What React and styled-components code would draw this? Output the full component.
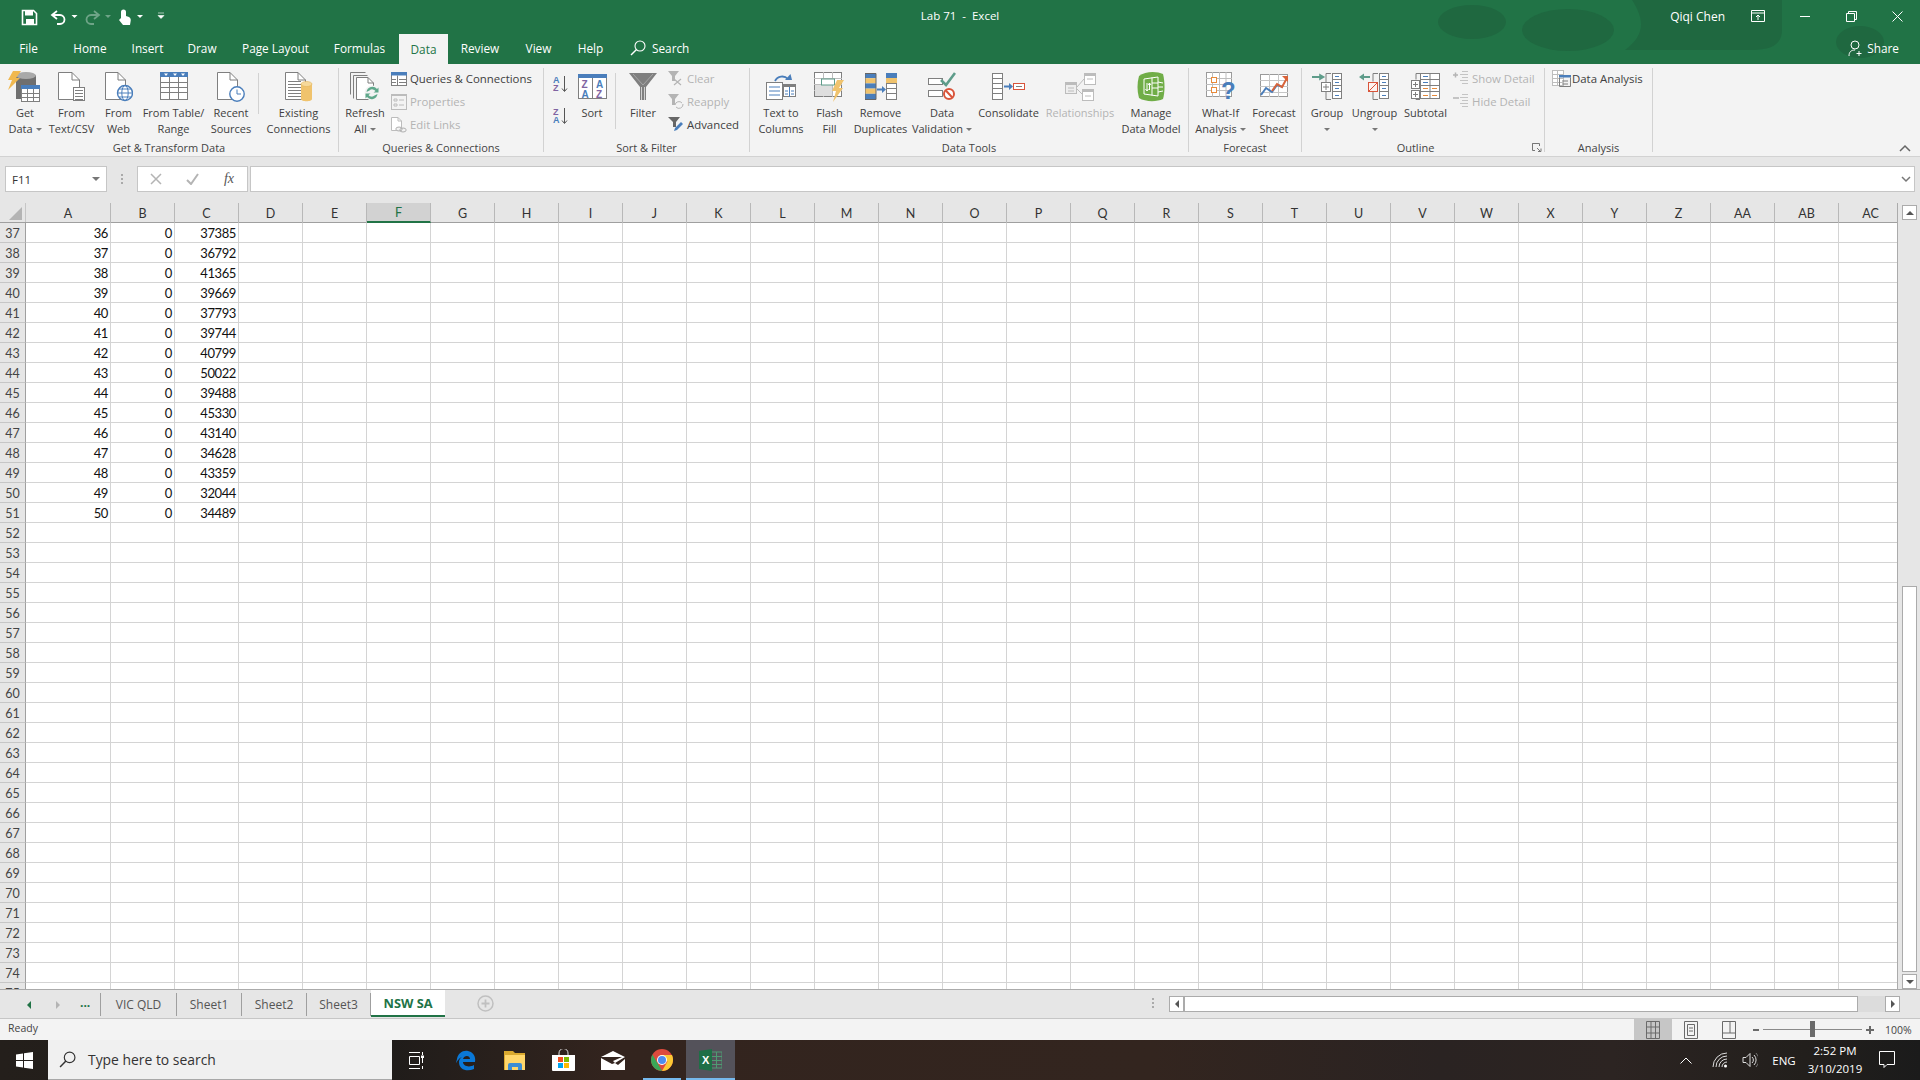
import React from 'react';
import styled, { createGlobalStyle } from 'styled-components';

const UI = `"Open Sans", "Noto Sans", sans-serif`;
const GREEN = '#217346';
const GRAY = '#7f7f7f';
const BLUE = '#4a7ebb';
const ORANGE = '#f0c36d';
const PURPLE = '#8064a2';

const GlobalStyle = createGlobalStyle`
  html, body { margin: 0; padding: 0; background: #fff; }
  * { box-sizing: border-box; }
`;

const Frame = styled.div`
  width: 1920px;
  height: 1080px;
  display: flex;
  flex-direction: column;
  overflow: hidden;
  font-family: ${UI};
  background: #e6e6e6;
`;

const Header = styled.header`
  position: relative;
  height: 64px;
  background: ${GREEN};
  color: #fff;
  flex-shrink: 0;
`;

const Blobs = styled.svg`
  position: absolute;
  right: 0;
  top: 0;
`;

const TitleRow = styled.div`
  position: relative;
  height: 32px;
  display: grid;
  grid-template-columns: 1fr auto 1fr;
  align-items: center;
`;

const Title = styled.div`
  font-size: 11.5px;
  margin-top: -1px;
`;

const WinControls = styled.div`
  display: flex;
  justify-content: flex-end;
  align-items: center;
`;

const UserName = styled.span`
  font-size: 12px;
  margin-right: 9px;
`;

const WinButton = styled.div`
  width: ${p => p.$w || 46}px;
  height: 32px;
  display: flex;
  align-items: center;
  justify-content: center;
`;

const TabRow = styled.nav`
  position: relative;
  height: 32px;
  padding-left: 3px;
  display: flex;
  align-items: stretch;
`;

const Tab = styled.div`
  width: ${p => p.$w}px;
  height: ${p => (p.$active ? 30 : 32)}px;
  margin-top: ${p => (p.$active ? 2 : 0)}px;
  padding-right: ${p => p.$pr || 0}px;
  display: flex;
  align-items: center;
  justify-content: center;
  font-size: 11.8px;
  color: ${p => (p.$active ? GREEN : '#fff')};
  background: ${p => (p.$active ? '#f3f3f3' : 'transparent')};
`;

const TellMe = styled.div`
  display: flex;
  align-items: center;
  gap: 6px;
  margin-left: 14px;
  font-size: 11.8px;
`;

const ShareBox = styled.div`
  margin-left: auto;
  margin-right: 21px;
  display: flex;
  align-items: center;
  gap: 3px;
  font-size: 11.8px;
`;

const Ribbon = styled.section`
  position: relative;
  height: 93px;
  flex-shrink: 0;
  padding-top: 4px;
  background: #f3f3f3;
  border-bottom: 1px solid #d2d2d2;
  display: flex;
  align-items: flex-start;
`;

const Group = styled.div`
  position: relative;
  width: ${p => p.$w}px;
  height: 84px;
  border-right: 1px solid #d2d2d2;
  display: flex;
  flex-direction: column;
`;

const GroupBody = styled.div`
  height: 72px;
  padding-left: ${p => p.$pl || 0}px;
  display: flex;
  align-items: flex-start;
`;

const GroupLabel = styled.div`
  height: 12px;
  line-height: 16px;
  padding-right: ${p => p.$pr || 0}px;
  text-align: center;
  font-size: 11px;
  color: #444;
  white-space: nowrap;
`;

const Launcher = styled.svg`
  position: absolute;
  right: 2px;
  bottom: -1px;
`;

const LargeButton = styled.div`
  width: ${p => p.$w}px;
  flex-shrink: 0;
  display: flex;
  flex-direction: column;
  align-items: center;
  color: ${p => (p.$off ? '#b4b4b4' : '#404040')};
`;

const IconSlot = styled.div`
  height: 37px;
  display: flex;
  align-items: center;
  justify-content: center;
`;

const Label = styled.div`
  font-size: 11px;
  line-height: 16px;
  min-height: 16px;
  text-align: center;
  white-space: nowrap;
`;

const Caret = styled.i`
  display: inline-block;
  margin-left: ${p => (p.$alone ? 0 : 3)}px;
  vertical-align: 2px;
  border-left: 3px solid transparent;
  border-right: 3px solid transparent;
  border-top: 3px solid #777;
`;

const SmallColumn = styled.div`
  display: flex;
  flex-direction: column;
  margin-top: -1px;
  margin-left: ${p => p.$ml || 0}px;
`;

const SmallButton = styled.div`
  height: ${p => p.$h || 23}px;
  display: flex;
  align-items: center;
  gap: ${p => (p.$gap === undefined ? 3 : p.$gap)}px;
  font-size: 11.4px;
  white-space: nowrap;
  color: ${p => (p.$off ? '#b4b4b4' : '#404040')};
`;

const InnerRule = styled.div`
  width: 1px;
  height: ${p => p.$h}px;
  margin: 5px ${p => p.$r}px 0 ${p => p.$l}px;
  background: #d2d2d2;
  flex-shrink: 0;
`;

const Collapse = styled.svg`
  position: absolute;
  right: 9px;
  bottom: 4px;
`;

const FormulaBar = styled.div`
  height: 46px;
  flex-shrink: 0;
  padding: 9px 5px 0 5px;
  display: flex;
  align-items: flex-start;
  background: #e6e6e6;
`;

const NameBox = styled.div`
  width: 102px;
  height: 26px;
  background: #fff;
  border: 1px solid #c6c6c6;
  display: flex;
  align-items: center;
  justify-content: space-between;
  padding: 0 6px;
  font-size: 11.5px;
  color: #333;
`;

const Grip = styled.div`
  width: 30px;
  height: 26px;
  display: flex;
  align-items: center;
  justify-content: center;
`;

const FxBox = styled.div`
  width: 111px;
  height: 26px;
  background: #fff;
  border: 1px solid #c6c6c6;
  margin-right: 2px;
  display: flex;
  align-items: center;
  justify-content: space-between;
  padding: 0 13px 0 12px;
`;

const FxLabel = styled.span`
  font-family: "Liberation Serif", serif;
  font-style: italic;
  font-size: 14px;
  color: #555;
`;

const FormulaInput = styled.div`
  flex: 1;
  height: 26px;
  background: #fff;
  border: 1px solid #c6c6c6;
  display: flex;
  align-items: center;
  justify-content: flex-end;
  padding-right: 3px;
`;

const SheetArea = styled.div`
  height: 787px;
  flex-shrink: 0;
  display: flex;
  border-bottom: 1px solid #ababab;
`;

const Grid = styled.div`
  width: 1898px;
  overflow: hidden;
  border-right: 1px solid #ababab;
  background: #fff;
`;

const HeadRow = styled.div`
  height: 20px;
  display: flex;
  background: #e6e6e6;
  border-bottom: 1px solid #9f9f9f;
`;

const Corner = styled.div`
  width: 26px;
  flex-shrink: 0;
  border-right: 1px solid #c6c6c6;
  display: flex;
  align-items: flex-end;
  justify-content: flex-end;
  padding: 0 3px 2px 0;
`;

const ColHead = styled.div`
  width: ${p => (p.$first ? 85 : 64)}px;
  flex-shrink: 0;
  display: flex;
  align-items: center;
  justify-content: center;
  font-family: "Lato", sans-serif;
  font-size: 12.5px;
  color: ${p => (p.$sel ? GREEN : '#333')};
  background: ${p => (p.$sel ? '#d2d2d2' : 'transparent')};
  border-right: 1px solid #b8b8b8;
  height: 20px;
  border-bottom: ${p => (p.$sel ? `2px solid ${GREEN}` : 'none')};
`;

const Row = styled.div`
  height: 20px;
  display: flex;
`;

const RowHead = styled.div`
  width: 26px;
  flex-shrink: 0;
  padding-top: 1px;
  background: #e6e6e6;
  border-right: 1px solid #9f9f9f;
  border-bottom: 1px solid #c6c6c6;
  display: flex;
  align-items: center;
  justify-content: center;
  font-family: "Lato", sans-serif;
  font-size: 12.5px;
  color: #444;
`;

const Cell = styled.div`
  width: ${p => (p.$first ? 85 : 64)}px;
  flex-shrink: 0;
  border-right: 1px solid #d4d4d4;
  border-bottom: 1px solid #d4d4d4;
  padding-right: 2px;
  text-align: right;
  line-height: 20px;
  font-family: "Lato", sans-serif;
  font-size: 13px;
  letter-spacing: -0.4px;
  color: #111;
`;

const VScroll = styled.div`
  flex: 1;
  padding: 2px 3px 0 4px;
  display: flex;
  flex-direction: column;
  background: #e6e6e6;
`;

const ScrollBtn = styled.div`
  flex-shrink: 0;
  width: ${p => p.$w || 15}px;
  height: ${p => p.$h || 15}px;
  background: #fff;
  border: 1px solid #ababab;
  display: flex;
  align-items: center;
  justify-content: center;
`;

const VThumb = styled.div`
  margin-top: auto;
  margin-bottom: 2px;
  height: 386px;
  background: #fff;
  border: 1px solid #ababab;
`;

const TabBar = styled.div`
  height: 29px;
  flex-shrink: 0;
  display: flex;
  align-items: flex-start;
  background: #e6e6e6;
  border-bottom: 1px solid #c6c6c6;
`;

const TabNav = styled.div`
  width: 101px;
  height: 23px;
  margin-top: 3px;
  border-right: 1px solid #9f9f9f;
  position: relative;
  display: flex;
  align-items: center;
`;

const NavDots = styled.span`
  position: absolute;
  left: 80px;
  top: 1px;
  font-weight: 700;
  font-size: 12px;
  color: ${GREEN};
`;

const SheetTab = styled.div`
  width: ${p => p.$w}px;
  height: ${p => (p.$active ? 27 : 23)}px;
  margin-top: ${p => (p.$active ? 0 : 3)}px;
  display: flex;
  align-items: center;
  justify-content: center;
  font-size: ${p => (p.$active ? 12.8 : 12)}px;
  font-weight: ${p => (p.$active ? 700 : 400)};
  color: ${p => (p.$active ? GREEN : '#555')};
  background: ${p => (p.$active ? '#fff' : 'transparent')};
  border-right: ${p => (p.$active ? 'none' : '1px solid #9f9f9f')};
  border-bottom: ${p => (p.$active ? `2px solid ${GREEN}` : 'none')};
`;

const AddSheet = styled.svg`
  margin: 5px 0 0 32px;
`;

const HScroll = styled.div`
  margin: 6px 20px 0 auto;
  width: 731px;
  height: 16px;
  display: flex;
  align-items: stretch;
  position: relative;
`;

const HGrip = styled.svg`
  position: absolute;
  left: -17px;
  top: 2px;
`;

const HThumb = styled.div`
  width: 674px;
  background: #fff;
  border: 1px solid #ababab;
`;

const HTrack = styled.div`
  flex: 1;
  background: #dcdcdc;
`;

const StatusBar = styled.div`
  height: 21px;
  flex-shrink: 0;
  padding-left: 8px;
  background: #f3f3f3;
  display: flex;
  align-items: stretch;
  justify-content: space-between;
  font-size: 10.5px;
  line-height: 18px;
  color: #444;
`;

const StatusRight = styled.div`
  display: flex;
  align-items: center;
  height: 100%;
`;

const ViewBtn = styled.div`
  width: 38px;
  height: 100%;
  display: flex;
  align-items: center;
  justify-content: center;
  background: ${p => (p.$active ? '#c6c6c6' : 'transparent')};
`;

const ZoomBox = styled.div`
  display: flex;
  align-items: center;
  margin: 0 11px 0 5px;
  gap: 4px;
`;

const ZoomTrack = styled.div`
  position: relative;
  width: 99px;
  height: 1px;
  background: #8a8a8a;
`;

const ZoomThumb = styled.div`
  position: absolute;
  left: 47px;
  top: -8px;
  width: 5px;
  height: 16px;
  background: #6a6a6a;
`;

const ZoomText = styled.span`
  width: 35px;
`;

const Taskbar = styled.div`
  flex: 1;
  display: flex;
  align-items: stretch;
  color: #fff;
  background: linear-gradient(90deg, #241f1b 0, #1f1c1a 20%, #33241e 32%, #33251f 60%, #2a2322 75%, #2c2422 84%, #221f1c 94%, #1b1b1b 100%);
`;

const StartBtn = styled.div`
  width: 48px;
  display: flex;
  align-items: center;
  justify-content: center;
`;

const SearchBox = styled.div`
  width: 344px;
  background: #f0f0f0;
  border-bottom: 1px solid #a8a8a8;
  display: flex;
  align-items: center;
  gap: 12px;
  padding-left: 11px;
  font-size: 13.9px;
  color: #333;
`;

const TaskSlot = styled.div`
  width: ${p => p.$w || 49}px;
  position: relative;
  display: flex;
  align-items: center;
  justify-content: center;
  background: ${p => (p.$active ? '#54525a' : 'transparent')};
  &::after {
    content: '';
    display: ${p => (p.$open ? 'block' : 'none')};
    position: absolute;
    left: ${p => (p.$active ? 0 : 6)}px;
    right: ${p => (p.$active ? 0 : 5)}px;
    bottom: 0;
    height: 2px;
    background: #76b9ed;
  }
`;

const Tray = styled.div`
  margin-left: auto;
  display: flex;
  align-items: center;
  height: 100%;
`;

const TraySlot = styled.div`
  width: ${p => p.$w}px;
  display: flex;
  align-items: center;
  justify-content: center;
  font-size: ${p => p.$fs || 11.5}px;
`;

const Clock = styled.div`
  width: 74px;
  text-align: center;
  font-size: 11.5px;
  line-height: 18px;
`;

/* ---- drawings ---- */

const PagePath = ({ x = 0, y = 0, w = 24, h = 28, fold = 8, stroke = GRAY }) => (
  <g>
    <path d={`M${x + .5} ${y + .5}H${x + w - fold}L${x + w - .5} ${y + fold}V${y + h - .5}H${x + .5}Z`} fill="#fff" stroke={stroke} />
    <path d={`M${x + w - fold} ${y + .5}V${y + fold}H${x + w - .5}`} fill="none" stroke={stroke} />
  </g>
);

const Rows = ({ x, y, w, n, gap, color = GRAY }) => (
  <path d={Array.from({ length: n }, (_, i) => `M${x} ${y + i * gap + .5}h${w}`).join('')} stroke={color} fill="none" />
);

const Box = ({ x, y, w, h, fill = '#fff', stroke = GRAY }) => (
  <rect x={x + .5} y={y + .5} width={w - 1} height={h - 1} fill={fill} stroke={stroke} />
);

const GetDataIcon = () => (
  <svg width="34" height="32">
    <path d="M4 4h24v10H14v14h-6V10H4z" fill="#6f6f6f" />
    <ellipse cx="18" cy="4.5" rx="10" ry="3.5" fill="#a9a9a9" />
    <path d="M5 0h8l-5 7h4L0 19l4-10H0z" fill="#f0b84f" />
    <Box x={13} y={14} w={19} h={17} />
    <rect x="13" y="14" width="19" height="4" fill={BLUE} />
    <path d="M13 22.5h19M13 26.5h19M19.5 18v13M25.5 18v13" stroke={GRAY} />
  </svg>
);

const TextFileIcon = () => (
  <svg width="28" height="30">
    <PagePath w={22} h={28} />
    <Box x={15} y={15} w={12} h={14} />
    <Rows x={17} y={18} w={8} n={4} gap={3} />
  </svg>
);

const WebIcon = () => (
  <svg width="28" height="30">
    <PagePath w={21} h={28} />
    <circle cx="20" cy="21" r="7.5" fill="#fff" stroke={BLUE} strokeWidth="1.4" />
    <ellipse cx="20" cy="21" rx="3.2" ry="7.5" fill="none" stroke={BLUE} />
    <path d="M12.5 21h15M14 17h12M14 25h12" stroke={BLUE} />
  </svg>
);

const TableIcon = () => (
  <svg width="28" height="29">
    <Box x={0} y={0} w={28} h={28} />
    <rect width="28" height="5" fill={BLUE} />
    <path d="M4 1.5h4L6 4zM13 1.5h4L15 4zM21 1.5h4L23 4z" fill="#fff" />
    <path d="M9.5 5v23M18.5 5v23M0 10.5h28M0 15.5h28M0 20.5h28" stroke={GRAY} />
  </svg>
);

const RecentIcon = () => (
  <svg width="28" height="30">
    <PagePath w={21} h={28} />
    <circle cx="20" cy="22" r="7.2" fill="#fff" stroke={BLUE} strokeWidth="1.4" />
    <path d="M20 17.5V22h4" stroke={BLUE} fill="none" />
  </svg>
);

const ExistingIcon = () => (
  <svg width="28" height="30">
    <PagePath w={21} h={28} />
    <Rows x={3} y={9} w={13} n={6} gap={3} />
    <path d="M16 12h11v15c0 3-11 3-11 0z" fill={ORANGE} />
    <ellipse cx="21.5" cy="12" rx="5.5" ry="2.5" fill="#f6d99b" stroke="#e0b35c" strokeWidth=".6" />
  </svg>
);

const RefreshIcon = () => (
  <svg width="30" height="30">
    <path d="M.5 .5h15M.5 .5v22M3.5 3.5h14M3.5 3.5v23" stroke={GRAY} fill="none" />
    <PagePath x={6} y={5} w={18} h={23} fold={6} />
    <circle cx="22" cy="21" r="7.5" fill="#f3f3f3" />
    <path d="M16.5 20a6 6 0 0 1 10.5-3l1.5-1.5v5h-5l2-1.5a4 4 0 0 0-6-.5z" fill="#5fa88b" />
    <path d="M27.5 22a6 6 0 0 1-10.5 3l-1.5 1.5v-5h5l-2 1.5a4 4 0 0 0 6 .5z" fill="#5fa88b" />
  </svg>
);

const QueriesIcon = () => (
  <svg width="16" height="14">
    <Box x={0} y={0} w={16} h={14} />
    <rect width="16" height="3.5" fill={BLUE} />
    <path d="M6.5 3.5V14M1 7.5h4M8 7.5h7M1 10.5h4M8 10.5h7" stroke={GRAY} />
  </svg>
);

const PropsIcon = () => (
  <svg width="16" height="16">
    <Box x={0} y={0} w={16} h={16} stroke="#bcbcbc" fill="#f3f3f3" />
    <rect y="0" width="16" height="2" fill="#bcbcbc" />
    <path d="M3 5h3v2H3zM3 10h3v2H3z" fill="none" stroke="#bcbcbc" />
    <path d="M8 6h5M8 11h5" stroke="#bcbcbc" />
  </svg>
);

const EditLinksIcon = () => (
  <svg width="16" height="16">
    <PagePath w={11} h={14} fold={4} stroke="#bcbcbc" />
    <ellipse cx="8" cy="12" rx="3.2" ry="2" fill="#f3f3f3" stroke="#b0b0b0" />
    <ellipse cx="12" cy="13" rx="3.2" ry="2" fill="none" stroke="#b0b0b0" />
  </svg>
);

const Glyph = styled.text`
  font-family: "Liberation Sans", sans-serif;
  font-size: ${p => p.$fs || 10}px;
  font-weight: ${p => p.$fw || 700};
`;

const SortSmallIcon = ({ flip }) => (
  <svg width="16" height="18">
    <Glyph x="0" y="8" $fs={9} fill={flip ? PURPLE : BLUE}>{flip ? 'Z' : 'A'}</Glyph>
    <Glyph x="0" y="16" $fs={9} fill={flip ? BLUE : PURPLE}>{flip ? 'A' : 'Z'}</Glyph>
    <path d="M11.5 1v15M9 13.5l2.5 3 2.5-3" stroke="#555" fill="none" />
  </svg>
);

const SortLargeIcon = () => (
  <svg width="29" height="26">
    <Box x={0} y={0} w={29} h={25} />
    <rect width="29" height="4" fill={BLUE} />
    <path d="M14.5 4v21" stroke={GRAY} />
    <Glyph x="3.5" y="14" $fs={10} fill={PURPLE}>Z</Glyph>
    <Glyph x="3.5" y="24" $fs={10} fill={BLUE}>A</Glyph>
    <Glyph x="18" y="14" $fs={10} fill={BLUE}>A</Glyph>
    <Glyph x="18" y="24" $fs={10} fill={PURPLE}>Z</Glyph>
  </svg>
);

const FilterIcon = () => (
  <svg width="28" height="27">
    <path d="M0 0h28L17 14v13h-6V14z" fill="#7f7f7f" />
    <path d="M4 1l10 11M24 1L14 12" stroke="#a6a6a6" />
    <path d="M12.5 14v13M15.5 14v13" stroke="#f3f3f3" strokeOpacity=".7" />
  </svg>
);

const ClearIcon = () => (
  <svg width="16" height="15">
    <path d="M0 0h11L7 5v5H4V5z" fill="#b4b4b4" />
    <path d="M6 8l7 6M13 8l-7 6" stroke="#b4b4b4" strokeWidth="1.2" />
  </svg>
);

const ReapplyIcon = () => (
  <svg width="16" height="15">
    <path d="M0 0h11L7 5v6H4V5z" fill="#b4b4b4" />
    <path d="M7 11a4 4 0 0 1 7-2M15 10a4 4 0 0 1-7 3" stroke="#b4b4b4" fill="none" />
  </svg>
);

const AdvancedIcon = () => (
  <svg width="16" height="15">
    <path d="M0 0h12L8 5v5H5V5z" fill="#666" />
    <path d="M6 14l1-3 6-6 2 2-6 6z" fill={BLUE} />
  </svg>
);

const TextColsIcon = () => (
  <svg width="30" height="30">
    <Box x={0} y={10} w={17} h={18} stroke={GRAY} />
    <path d="M3 15h11M3 19h11M3 23h11" stroke={BLUE} />
    <Box x={17} y={12} w={13} h={13} fill="#fff" />
    <rect x="17" y="12" width="13" height="3" fill={GRAY} />
    <path d="M23.5 15v10M19 19h3M19 22h3M25 19h3M25 22h3" stroke={BLUE} />
    <path d="M9 9a8 8 0 0 1 13-2" stroke={BLUE} strokeWidth="1.8" fill="none" />
    <path d="M19 8h7l-1.5-6z" fill={BLUE} />
  </svg>
);

const FlashIcon = () => (
  <svg width="31" height="30">
    <Box x={0} y={0} w={28} h={25} />
    <path d="M0 6.5h28M0 12.5h28M0 18.5h28M9.5 0v25M18.5 0v25" stroke="#bdbdbd" />
    <rect x="1" y="13" width="17" height="11" fill="#dedede" />
    <rect x="7.5" y="7" width="13" height="6" fill="#fff" stroke="#5e9c8a" />
    <path d="M23 8h7l-5 8h4L19 30l3-11h-4z" fill={ORANGE} />
  </svg>
);

const RemoveDupIcon = () => (
  <svg width="32" height="27">
    {[BLUE, ORANGE, BLUE, ORANGE, BLUE].map((c, i) => <rect key={i} x="0" y={i * 5.2} width="11" height="5.2" fill={c} />)}
    <path d="M0 .5h11v26H0z" fill="none" stroke="#666" />
    <path d="M12 15.5h5v-2.5l4 3.5-4 3.5v-2.5h-5z" fill={BLUE} />
    <Box x={21} y={0} w={11} h={27} />
    <rect x="21" width="11" height="5" fill={BLUE} />
    <rect x="21" y="5" width="11" height="5" fill={ORANGE} />
    <path d="M21 10.5h11M21 15.5h11M21 20.5h11" stroke={GRAY} />
  </svg>
);

const ValidationIcon = () => (
  <svg width="28" height="29">
    <Box x={0} y={6} w={15} h={7} />
    <Box x={0} y={18} w={15} h={7} />
    <path d="M13 8l5 5 9-12" fill="none" stroke="#5e9c8a" strokeWidth="2.6" />
    <circle cx="21" cy="22" r="5" fill="#fff" stroke="#d9543a" strokeWidth="2" />
    <path d="M17.8 18.5l6.5 7" stroke="#d9543a" strokeWidth="2" />
  </svg>
);

const ConsolidateIcon = () => (
  <svg width="33" height="27">
    <Box x={0} y={0} w={11} h={27} />
    <path d="M0 5.5h11M0 10.5h11M0 15.5h11M0 20.5h11" stroke={GRAY} />
    <path d="M12 12.5h5v-2.5l4 3.5-4 3.5v-2.5h-5z" fill={BLUE} />
    <Box x={21} y={10} w={12} h={7} stroke="#d9543a" />
    <path d="M24 13.5h6" stroke={GRAY} />
  </svg>
);

const RelationIcon = () => (
  <svg width="31" height="28">
    <Box x={0} y={9} w={12} h={12} stroke="#bcbcbc" fill="#eee" />
    <rect y="9" width="12" height="3" fill="#bcbcbc" />
    <Box x={19} y={0} w={12} h={12} stroke="#bcbcbc" />
    <rect x="19" width="12" height="3" fill="#bcbcbc" />
    <Box x={17} y={16} w={12} h={12} stroke="#bcbcbc" />
    <rect x="17" y="16" width="12" height="3" fill="#bcbcbc" />
    <path d="M12 14l7-8M12 16l5 5M3 15h6M3 18h6M22 6h6M20 23h6" stroke="#bcbcbc" />
  </svg>
);

const ModelIcon = () => (
  <svg width="28" height="31">
    <path d="M2 5C8 0 20 0 26 3c2 8 2 18 0 25-6 3-18 3-24-1-2-7-2-15 0-22z" fill="#70ad47" />
    <path d="M7 8l14-2v19l-14-2z" fill="none" stroke="#fff" />
    <path d="M15 6.5v18M21 11l5 1M21 16h5M21 21l5-1M15 12h6M15 17h6" stroke="#fff" />
    <path d="M10 12v8M8.5 18l1.5 2 1.5-2M12.5 12v7M11 14l1.5-2 1.5 2" stroke="#fff" fill="none" />
  </svg>
);

const WhatIfIcon = () => (
  <svg width="30" height="30">
    <Box x={0} y={0} w={26} h={25} stroke="#9a9a9a" />
    <path d="M0 6.5h26M0 12.5h26M0 18.5h26M6.5 0v25M13.5 0v25M20 0v25" stroke="#bdbdbd" />
    <Box x={5} y={5} w={6} h={6} stroke="#e88a3a" />
    <Box x={5} y={15} w={6} h={6} stroke="#e88a3a" />
    <Glyph x="15" y="27" $fs={24} fill={BLUE}>?</Glyph>
  </svg>
);

const ForecastIcon = () => (
  <svg width="29" height="26">
    <Box x={0} y={0} w={28} h={23} stroke="#9a9a9a" />
    <path d="M0 6.5h28M0 12.5h28M0 18.5h28M9.5 0v23M18.5 0v23" stroke="#c6c6c6" />
    <path d="M1 21l5-7 6 4 5-7 6 2" fill="none" stroke={BLUE} strokeWidth="2" />
    <path d="M12 17l5-7 5 3 5-9" fill="none" stroke="#d9643a" strokeWidth="2" />
    <path d="M22 2h6v6z" fill="#d9643a" />
  </svg>
);

const OutlineStack = ({ x }) => (
  <g>
    <Box x={x} y={0} w={10} h={26} />
    <path d={`M${x} 6.5h10M${x} 12.5h10M${x} 18.5h10`} stroke={GRAY} />
    <path d={`M${x + 3} 3.5h4M${x + 3} 9.5h4M${x + 3} 15.5h4M${x + 3} 22.5h4`} stroke={BLUE} strokeWidth="1.2" />
  </g>
);

const GroupIcon = () => (
  <svg width="31" height="27">
    <path d="M0 4h6v-2.5l5 3.5-5 3.5V6H0z" fill="#5e9c8a" transform="translate(0 -1) scale(1.2 1)" />
    <path d="M19 .5h-5v9M14 19v7.5h5" stroke={GRAY} fill="none" />
    <Box x={9} y={9} w={10} h={10} />
    <path d="M11 14h6M14 11v6" stroke={GRAY} />
    <OutlineStack x={20} />
  </svg>
);

const UngroupIcon = () => (
  <svg width="31" height="27">
    <path d="M12 4H6v-2.5L1 5l5 3.5V6h6z" fill="#5e9c8a" transform="translate(-1 -1)" />
    <path d="M19 .5h-5v8M14 19v7.5h5" stroke={GRAY} fill="none" />
    <Box x={9} y={9} w={10} h={10} stroke="#d9543a" fill="#fdf3ef" />
    <path d="M10 18l8-8" stroke="#d9543a" />
    <OutlineStack x={20} />
  </svg>
);

const SubtotalIcon = () => (
  <svg width="30" height="27">
    <path d="M9 .5H5v6M5 21v5.5h4" stroke={GRAY} fill="none" />
    <Box x={0} y={7} w={9} h={9} />
    <Box x={0} y={17} w={9} h={9} />
    <path d="M2 11.5h5M4.5 9v5M2 21.5h5M4.5 19v5" stroke={GRAY} />
    <Box x={9} y={0} w={20} h={26} />
    <path d="M9 6.5h20M9 12.5h20M9 18.5h20M19 0v26" stroke={GRAY} />
    <path d="M12 3.5h5M12 9.5h5M12 15.5h5" stroke={BLUE} strokeWidth="1.2" />
    <path d="M12 15.5h5M21 15.5h5M12 22.5h5M21 22.5h5" stroke="#e88a3a" strokeWidth="1.2" />
  </svg>
);

const DetailIcon = ({ plus }) => (
  <svg width="16" height="15">
    <path d={plus ? 'M0 4h5M2.5 1.5v5' : 'M0 4h6'} stroke="#b4b4b4" strokeWidth="1.5" />
    <path d="M9 .5h6M7 3.5h8M9 6.5h6M7 9.5h8M9 12.5h6" stroke="#c4c4c4" fill="none" />
  </svg>
);

const AnalysisIcon = () => (
  <svg width="20" height="17">
    <Box x={0} y={0} w={12} h={16} stroke="#bdbdbd" />
    <path d="M0 4.5h12M0 8.5h12M0 12.5h12M5.5 0v16" stroke="#bdbdbd" />
    <rect x="7" y="5" width="12" height="2.5" fill={BLUE} />
    <path d="M7.5 7.5v9h11v-9M10 11h6M10 14h6" stroke={GRAY} fill="none" />
  </svg>
);

const QatIcons = () => (
  <svg width="172" height="32">
    <path d="M22.5 10.5h11l3 3v11h-14z" fill="none" stroke="#fff" strokeWidth="1.6" />
    <rect x="25" y="11" width="8" height="4.5" fill="#fff" />
    <rect x="26" y="19" width="8" height="5" fill="#fff" />
    <path d="M57 11l-5 4 5 4M52 15h8a4.5 4.5 0 0 1 0 9h-3" fill="none" stroke="#fff" strokeWidth="1.8" />
    <path d="M71.5 15h6l-3 3z" fill="#fff" />
    <path d="M94 11l5 4-5 4M99 15h-8a4.5 4.5 0 0 0 0 9h3" fill="none" stroke="#6ea487" strokeWidth="1.8" />
    <path d="M105 15h6l-3 3z" fill="#6ea487" />
    <path d="M121 18v-6a2.5 2.5 0 0 1 5 0v4l3 1c2 1 2 3 1.5 5l-.5 3h-7l-4-5 2-2z" fill="#fff" />
    <path d="M137 15h6l-3 3z" fill="#fff" />
    <path d="M158 13h6M158 15.5h6l-3 3z" fill="#fff" stroke="#fff" strokeWidth=".6" />
  </svg>
);

const WinIcon = ({ kind }) => {
  if (kind === 'ribbon') return (
    <svg width="14" height="12" fill="none" stroke="#fff"><path d="M.5 .5h13v11H.5zM.5 3h13" /><path d="M7 10V5M5 7l2-2 2 2" /></svg>
  );
  if (kind === 'min') return <svg width="11" height="11"><path d="M0 5.5h10" stroke="#fff" /></svg>;
  if (kind === 'max') return <svg width="11" height="11" fill="none" stroke="#fff"><path d="M.5 2.5h8v8h-8zM2.5 2.5v-2h8v8h-2" /></svg>;
  return <svg width="11" height="11" stroke="#fff"><path d="M.5 .5l10 10M10.5 .5l-10 10" /></svg>;
};

const SearchGlyph = ({ size = 16, color = '#fff' }) => (
  <svg width={size} height={size} viewBox="0 0 16 16" fill="none" stroke={color} strokeWidth="1.1">
    <circle cx="10" cy="6" r="5" />
    <path d="M6.5 9.5L1 15" strokeWidth="1.4" />
  </svg>
);

const ShareGlyph = () => (
  <svg width="16" height="17" fill="none" stroke="#fff">
    <circle cx="7" cy="5" r="4" />
    <path d="M1 16c0-4 2-6 6-6M11 11v5M8.5 13.5h5" />
  </svg>
);

const Arrow = ({ dir, color = '#555', size = 3 }) => {
  const d = {
    up: `M0 ${size + 1}L${size + 1} 0l${size + 1} ${size + 1}z`,
    down: `M0 0h${2 * size + 2}l-${size + 1} ${size + 1}z`,
    left: `M${size + 1} 0v${2 * size + 2}L0 ${size + 1}z`,
    right: `M0 0v${2 * size + 2}l${size + 1} -${size + 1}z`,
  }[dir];
  const horiz = dir === 'left' || dir === 'right';
  return (
    <svg width={horiz ? size + 1 : 2 * size + 2} height={horiz ? 2 * size + 2 : size + 1}>
      <path d={d} fill={color} />
    </svg>
  );
};

const WindowsLogo = () => (
  <svg width="17" height="17" fill="#fff">
    <path d="M0 2.5l7-1v6.5H0zM8 1.3l9-1.3v8H8zM0 9h7v6.5l-7-1zM8 9h9v8l-9-1.3z" />
  </svg>
);

const TaskViewIcon = () => (
  <svg width="16" height="17" fill="none" stroke="#fff">
    <path d="M0 .5h11M0 16.5h11M.5 4.5h10v8H.5zM13.5 0v3M13.5 6v5M13.5 14v3" />
    <rect x="12" y="3.5" width="3" height="2.5" fill="#fff" stroke="none" />
  </svg>
);

const EdgeIcon = () => (
  <svg width="20" height="21" viewBox="0 0 20 21">
    <path d="M1 9C2 3 7 0 12 1c5 1 8 5 7 11H7c0 4 6 6 11 3v4c-7 3-15 1-15-7 0-2 1-4 3-5C3 8 1 11 .5 13 0 12 .8 10 1 9zM7 9h7c0-4-6-4-7 0z" fill="#0a78d7" fillRule="evenodd" />
  </svg>
);

const FolderIcon = () => (
  <svg width="22" height="19">
    <path d="M0 0h9l2 2h10v17H0z" fill="#d9a92f" />
    <rect x="1" y="4" width="20" height="15" fill="#ffd76b" />
    <path d="M4 19v-5a2 2 0 0 1 2-2h10a2 2 0 0 1 2 2v5h-4v-3H8v3z" fill="#3c8dd4" />
  </svg>
);

const StoreIcon = () => (
  <svg width="23" height="22">
    <path d="M7 6V4a4.5 4.5 0 0 1 9 0v2" fill="none" stroke="#ddd" />
    <path d="M0 6h23v15a1 1 0 0 1-1 1H1a1 1 0 0 1-1-1z" fill="#fff" />
    <rect x="6" y="8" width="5" height="5" fill="#f25022" />
    <rect x="12" y="8" width="5" height="5" fill="#7fba00" />
    <rect x="6" y="14" width="5" height="5" fill="#00a4ef" />
    <rect x="12" y="14" width="5" height="5" fill="#ffb900" />
  </svg>
);

const MailIcon = () => (
  <svg width="24" height="19">
    <path d="M0 6L12 0l12 6L14 12l-2-2 9-4z" fill="#fff" />
    <path d="M0 7l11 6 3-1 3 2 7-6v11H0z" fill="#fff" />
  </svg>
);

const ChromeIcon = () => (
  <svg width="22" height="22" viewBox="0 0 22 22">
    <circle cx="11" cy="11" r="11" fill="#dd4b3e" />
    <path d="M11 22A11 11 0 0 1 1.5 5.5L7 15l4 7z" fill="#3aa757" />
    <path d="M22 11a11 11 0 0 1-11 11l5.5-9.5L11 6h10a11 11 0 0 1 1 5z" fill="#fcc934" />
    <circle cx="11" cy="11" r="5" fill="#fff" />
    <circle cx="11" cy="11" r="4" fill="#4e8cf0" />
  </svg>
);

const ExcelIcon = () => (
  <svg width="23" height="22">
    <rect x="12" y="3" width="11" height="16" fill="none" stroke="#4f9a72" />
    <path d="M12 7.5h11M12 11.5h11M12 15.5h11M17.5 3v16" stroke="#4f9a72" />
    <path d="M0 2l13-2v22L0 20z" fill="#1e6f46" />
    <Glyph x="3" y="15" $fs={11} fill="#fff">X</Glyph>
  </svg>
);

const WifiIcon = () => (
  <svg width="16" height="16" fill="none" stroke="#ddd">
    <path d="M1 15a14 14 0 0 1 14-14M4 15a11 11 0 0 1 11-11M7 15a8 8 0 0 1 8-8M10 15a5 5 0 0 1 5-5" />
    <circle cx="13.5" cy="14" r="1.5" fill="#fff" stroke="none" />
  </svg>
);

const VolumeIcon = () => (
  <svg width="16" height="16" fill="none" stroke="#ddd">
    <path d="M1 5.5h3l4-4v13l-4-4H1zM10 5a4 4 0 0 1 0 6M12 3a7 7 0 0 1 0 10" />
    <path d="M14 1a10 10 0 0 1 0 14" stroke="#777" />
  </svg>
);

/* ---- data ---- */

const COLUMNS = 'ABCDEFGHIJKLMNOPQRSTUVWXYZ'.split('').concat(['AA', 'AB', 'AC']);
const VALUES = [37385, 36792, 41365, 39669, 37793, 39744, 40799, 50022, 39488, 45330, 43140, 34628, 43359, 32044, 34489];
const ROWS = Array.from({ length: 39 }, (_, i) => 37 + i);
const TABS = [
  ['File', 55, 4], ['Home', 64], ['Insert', 51], ['Draw', 58], ['Page Layout', 89], ['Formulas', 79],
  ['Data', 49], ['Review', 64], ['View', 53], ['Help', 51],
];

function Large({ w, icon, lines, caret, off }) {
  return (
    <LargeButton $w={w} $off={off}>
      <IconSlot>{icon}</IconSlot>
      <Label>{lines[0]}</Label>
      <Label>
        {lines[1]}
        {caret && <Caret $alone={!lines[1]} />}
      </Label>
    </LargeButton>
  );
}

function Small({ icon, text, off, gap }) {
  return (
    <SmallButton $off={off} $gap={gap}>
      {icon}
      {text}
    </SmallButton>
  );
}

export default function App() {
  return (
    <Frame>
      <GlobalStyle />
      <Header>
        <Blobs width="500" height="64" fill="#1f6840">
          <ellipse cx="52" cy="22" rx="34" ry="17" />
          <ellipse cx="148" cy="30" rx="46" ry="21" />
          <path d="M212 0h150v30c0 14-10 20-30 20H205c20-15 20-30 7-50z" />
          <ellipse cx="440" cy="42" rx="24" ry="16" />
        </Blobs>
        <TitleRow>
          <QatIcons />
          <Title>Lab 71 &nbsp;-&nbsp; Excel</Title>
          <WinControls>
            <UserName>Qiqi Chen</UserName>
            <WinButton $w={48}><WinIcon kind="ribbon" /></WinButton>
            <WinButton><WinIcon kind="min" /></WinButton>
            <WinButton><WinIcon kind="max" /></WinButton>
            <WinButton><WinIcon kind="close" /></WinButton>
          </WinControls>
        </TitleRow>
        <TabRow>
          {TABS.map(([name, w, pr]) => (
            <Tab key={name} $w={w} $pr={pr} $active={name === 'Data'}>{name}</Tab>
          ))}
          <TellMe><SearchGlyph />Search</TellMe>
          <ShareBox><ShareGlyph />Share</ShareBox>
        </TabRow>
      </Header>

      <Ribbon>
        <Group $w={339}>
          <GroupBody $pl={3}>
            <Large w={44} icon={<GetDataIcon />} lines={['Get', 'Data']} caret />
            <Large w={49} icon={<TextFileIcon />} lines={['From', 'Text/CSV']} />
            <Large w={45} icon={<WebIcon />} lines={['From', 'Web']} />
            <Large w={65} icon={<TableIcon />} lines={['From Table/', 'Range']} />
            <Large w={50} icon={<RecentIcon />} lines={['Recent', 'Sources']} />
            <InnerRule $h={41} $l={2} $r={3} />
            <Large w={73} icon={<ExistingIcon />} lines={['Existing', 'Connections']} />
          </GroupBody>
          <GroupLabel>Get &amp; Transform Data</GroupLabel>
        </Group>

        <Group $w={205}>
          <GroupBody>
            <Large w={52} icon={<RefreshIcon />} lines={['Refresh', 'All']} caret />
            <SmallColumn>
              <Small icon={<QueriesIcon />} text="Queries & Connections" />
              <Small off icon={<PropsIcon />} text="Properties" />
              <Small off icon={<EditLinksIcon />} text="Edit Links" />
            </SmallColumn>
          </GroupBody>
          <GroupLabel>Queries &amp; Connections</GroupLabel>
        </Group>

        <Group $w={206}>
          <GroupBody $pl={9}>
            <SmallColumn>
              <SmallButton $h={33}><SortSmallIcon /></SmallButton>
              <SmallButton $h={32}><SortSmallIcon flip /></SmallButton>
            </SmallColumn>
            <Large w={46} icon={<SortLargeIcon />} lines={['Sort', '']} />
            <InnerRule $h={56} $l={0} $r={3} />
            <Large w={48} icon={<FilterIcon />} lines={['Filter', '']} />
            <SmallColumn $ml={1}>
              <Small off icon={<ClearIcon />} text="Clear" />
              <Small off icon={<ReapplyIcon />} text="Reapply" />
              <Small icon={<AdvancedIcon />} text="Advanced" />
            </SmallColumn>
          </GroupBody>
          <GroupLabel>Sort &amp; Filter</GroupLabel>
        </Group>

        <Group $w={439}>
          <GroupBody $pl={3}>
            <Large w={56} icon={<TextColsIcon />} lines={['Text to', 'Columns']} />
            <Large w={41} icon={<FlashIcon />} lines={['Flash', 'Fill']} />
            <Large w={61} icon={<RemoveDupIcon />} lines={['Remove', 'Duplicates']} />
            <Large w={62} icon={<ValidationIcon />} lines={['Data', 'Validation']} caret />
            <Large w={71} icon={<ConsolidateIcon />} lines={['Consolidate', '']} />
            <Large w={72} off icon={<RelationIcon />} lines={['Relationships', '']} />
            <Large w={70} icon={<ModelIcon />} lines={['Manage', 'Data Model']} />
          </GroupBody>
          <GroupLabel>Data Tools</GroupLabel>
        </Group>

        <Group $w={113}>
          <GroupBody $pl={2}>
            <Large w={59} icon={<WhatIfIcon />} lines={['What-If', 'Analysis']} caret />
            <Large w={48} icon={<ForecastIcon />} lines={['Forecast', 'Sheet']} />
          </GroupBody>
          <GroupLabel>Forecast</GroupLabel>
        </Group>

        <Group $w={243}>
          <GroupBody $pl={2}>
            <Large w={46} icon={<GroupIcon />} lines={['Group', '']} caret />
            <Large w={49} icon={<UngroupIcon />} lines={['Ungroup', '']} caret />
            <Large w={53} icon={<SubtotalIcon />} lines={['Subtotal', '']} />
            <SmallColumn $ml={1}>
              <Small off icon={<DetailIcon plus />} text="Show Detail" />
              <Small off icon={<DetailIcon />} text="Hide Detail" />
            </SmallColumn>
          </GroupBody>
          <GroupLabel $pr={15}>Outline</GroupLabel>
          <Launcher width="10" height="10" fill="none" stroke="#777">
            <path d="M.5 3V.5h7V3M.5 .5v7H3M5 5l3.5 3.5M6 8.5h3v-3" />
          </Launcher>
        </Group>

        <Group $w={108}>
          <GroupBody $pl={7}>
            <SmallColumn>
              <Small gap={0} icon={<AnalysisIcon />} text="Data Analysis" />
            </SmallColumn>
          </GroupBody>
          <GroupLabel>Analysis</GroupLabel>
        </Group>

        <Collapse width="12" height="8" fill="none" stroke="#666" strokeWidth="1.5">
          <path d="M1 7l5-5 5 5" />
        </Collapse>
      </Ribbon>

      <FormulaBar>
        <NameBox>F11<Arrow dir="down" color="#777" /></NameBox>
        <Grip>
          <svg width="3" height="11" fill="#aaa"><rect width="2" height="2" /><rect y="4" width="2" height="2" /><rect y="8" width="2" height="2" /></svg>
        </Grip>
        <FxBox>
          <svg width="12" height="12" stroke="#b4b4b4" strokeWidth="1.5"><path d="M1 1l10 10M11 1L1 11" /></svg>
          <svg width="13" height="12" fill="none" stroke="#b4b4b4" strokeWidth="2"><path d="M1 7l4 4 7-10" /></svg>
          <FxLabel>fx</FxLabel>
        </FxBox>
        <FormulaInput>
          <svg width="10" height="7" fill="none" stroke="#777" strokeWidth="1.5"><path d="M1 1l4 4 4-4" /></svg>
        </FormulaInput>
      </FormulaBar>

      <SheetArea>
        <Grid>
          <HeadRow>
            <Corner>
              <svg width="13" height="13"><path d="M13 0v13H0z" fill="#b4b4b4" /></svg>
            </Corner>
            {COLUMNS.map((c, i) => (
              <ColHead key={c} $first={i === 0} $sel={c === 'F'}>{c}</ColHead>
            ))}
          </HeadRow>
          {ROWS.map((r) => {
            const idx = r - 37;
            const hasData = idx < VALUES.length;
            return (
              <Row key={r}>
                <RowHead>{r}</RowHead>
                {COLUMNS.map((c, i) => (
                  <Cell key={c} $first={i === 0}>
                    {hasData && i === 0 && r - 1}
                    {hasData && i === 1 && 0}
                    {hasData && i === 2 && VALUES[idx]}
                  </Cell>
                ))}
              </Row>
            );
          })}
        </Grid>
        <VScroll>
          <ScrollBtn><Arrow dir="up" /></ScrollBtn>
          <VThumb />
          <ScrollBtn><Arrow dir="down" /></ScrollBtn>
        </VScroll>
      </SheetArea>

      <TabBar>
        <TabNav>
          <svg width="101" height="23">
            <path d="M31 8v8l-4-4z" fill={GREEN} />
            <path d="M56 8v8l4-4z" fill="#b4b4b4" />
          </svg>
          <NavDots>...</NavDots>
        </TabNav>
        <SheetTab $w={76}>VIC QLD</SheetTab>
        <SheetTab $w={65}>Sheet1</SheetTab>
        <SheetTab $w={65}>Sheet2</SheetTab>
        <SheetTab $w={64}>Sheet3</SheetTab>
        <SheetTab $w={74} $active>NSW SA</SheetTab>
        <AddSheet width="17" height="17" fill="none" stroke="#c0c0c0">
          <circle cx="8.5" cy="8.5" r="7.5" strokeWidth="1.5" />
          <path d="M4.5 8.5h8M8.5 4.5v8" strokeWidth="1.8" />
        </AddSheet>
        <HScroll>
          <HGrip width="3" height="11" fill="#aaa">
            <rect width="2" height="2" /><rect y="4" width="2" height="2" /><rect y="8" width="2" height="2" />
          </HGrip>
          <ScrollBtn $h={16}><Arrow dir="left" /></ScrollBtn>
          <HThumb />
          <HTrack />
          <ScrollBtn $h={16}><Arrow dir="right" /></ScrollBtn>
        </HScroll>
      </TabBar>

      <StatusBar>
        <span>Ready</span>
        <StatusRight>
          <ViewBtn $active>
            <svg width="14" height="18" fill="none" stroke="#6a6a6a"><path d="M.5 .5h13v17H.5zM5 .5v17M9.5 .5v17M.5 6h13M.5 12h13" /></svg>
          </ViewBtn>
          <ViewBtn>
            <svg width="14" height="18" fill="none" stroke="#6a6a6a"><path d="M.5 .5h13v17H.5zM3.5 3.5h7v11h-7zM5 7h4M5 10h4" /></svg>
          </ViewBtn>
          <ViewBtn>
            <svg width="14" height="18" fill="none" stroke="#6a6a6a"><path d="M.5 .5h13v17H.5zM.5 12h13M8 .5V12" /></svg>
          </ViewBtn>
          <ZoomBox>
            <svg width="6" height="6"><path d="M0 3h6" stroke="#6a6a6a" strokeWidth="2" /></svg>
            <ZoomTrack><ZoomThumb /></ZoomTrack>
            <svg width="8" height="8"><path d="M0 4h8M4 0v8" stroke="#6a6a6a" strokeWidth="2" /></svg>
          </ZoomBox>
          <ZoomText>100%</ZoomText>
        </StatusRight>
      </StatusBar>

      <Taskbar>
        <StartBtn><WindowsLogo /></StartBtn>
        <SearchBox><SearchGlyph size={17} color="#333" />Type here to search</SearchBox>
        <TaskSlot><TaskViewIcon /></TaskSlot>
        <TaskSlot><EdgeIcon /></TaskSlot>
        <TaskSlot><FolderIcon /></TaskSlot>
        <TaskSlot><StoreIcon /></TaskSlot>
        <TaskSlot><MailIcon /></TaskSlot>
        <TaskSlot $open><ChromeIcon /></TaskSlot>
        <TaskSlot $open $active><ExcelIcon /></TaskSlot>
        <Tray>
          <TraySlot $w={48}>
            <svg width="12" height="7" fill="none" stroke="#fff"><path d="M.5 6.5L6 1l5.5 5.5" /></svg>
          </TraySlot>
          <TraySlot $w={20}><WifiIcon /></TraySlot>
          <TraySlot $w={40}><VolumeIcon /></TraySlot>
          <TraySlot $w={28}>ENG</TraySlot>
          <Clock>2:52 PM<br />3/10/2019</Clock>
          <TraySlot $w={30}>
            <svg width="16" height="18" fill="none" stroke="#fff"><path d="M.5 .5h15v13H8l-3 3v-3H.5z" /></svg>
          </TraySlot>
          <TraySlot $w={18} />
        </Tray>
      </Taskbar>
    </Frame>
  );
}
